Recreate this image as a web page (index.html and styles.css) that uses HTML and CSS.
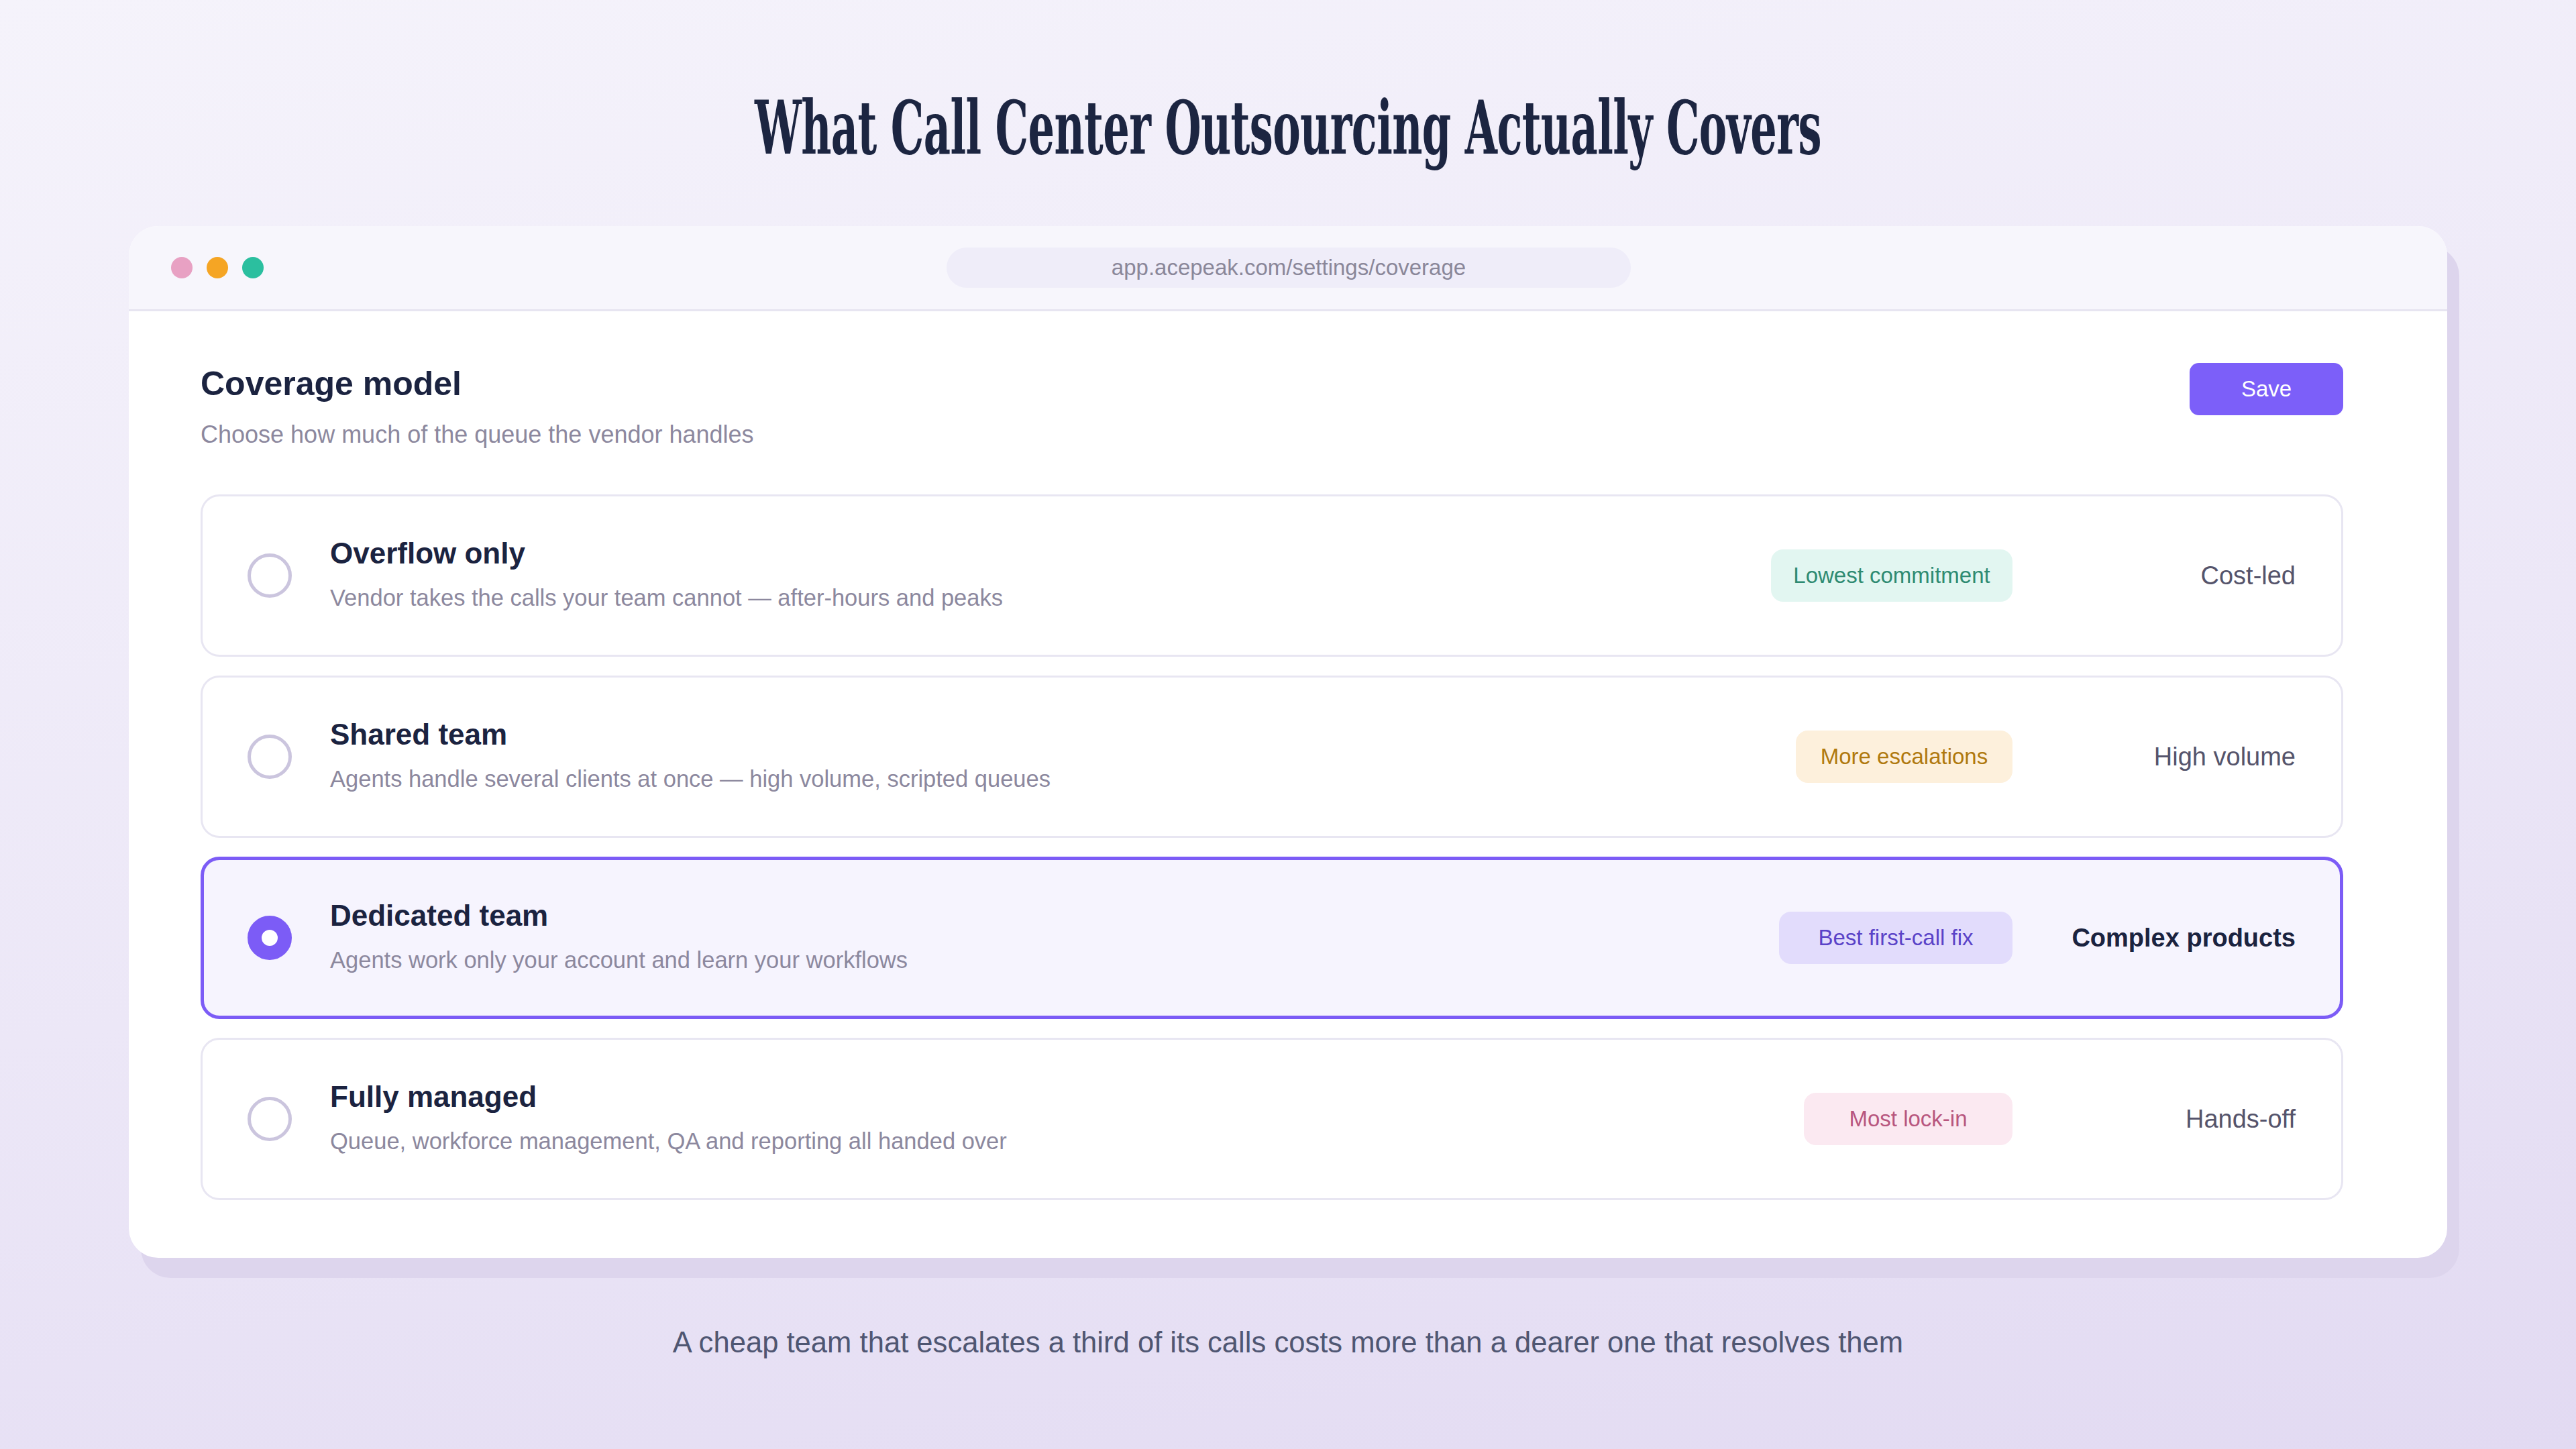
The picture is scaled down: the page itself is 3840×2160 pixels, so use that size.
FILE: index.html
```html
<!DOCTYPE html>
<html lang="en">
<head>
<meta charset="utf-8">
<title>What Call Center Outsourcing Actually Covers</title>
<link rel="stylesheet" href="styles.css">
</head>
<body>
<main class="slide">
  <h1 class="headline"><span class="headline__text">What Call Center Outsourcing Actually Covers</span></h1>

  <section class="window">
    <header class="window__bar">
      <div class="dots">
        <span class="dot dot--pink"></span>
        <span class="dot dot--orange"></span>
        <span class="dot dot--green"></span>
      </div>
      <div class="url">app.acepeak.com/settings/coverage</div>
      <div class="bar-spacer"></div>
    </header>

    <div class="window__body">
      <div class="panel-head">
        <div class="panel-head__text">
          <h2 class="panel-title">Coverage model</h2>
          <p class="panel-sub">Choose how much of the queue the vendor handles</p>
        </div>
        <button class="btn-save" type="button">Save</button>
      </div>

      <ul class="options">
        <li class="option">
          <span class="radio"></span>
          <div class="option__text">
            <div class="option__title">Overflow only</div>
            <div class="option__desc">Vendor takes the calls your team cannot — after-hours and peaks</div>
          </div>
          <span class="badge badge--teal">Lowest commitment</span>
          <span class="option__fit">Cost-led</span>
        </li>
        <li class="option">
          <span class="radio"></span>
          <div class="option__text">
            <div class="option__title">Shared team</div>
            <div class="option__desc">Agents handle several clients at once — high volume, scripted queues</div>
          </div>
          <span class="badge badge--amber">More escalations</span>
          <span class="option__fit">High volume</span>
        </li>
        <li class="option option--selected">
          <span class="radio radio--on"></span>
          <div class="option__text">
            <div class="option__title">Dedicated team</div>
            <div class="option__desc">Agents work only your account and learn your workflows</div>
          </div>
          <span class="badge badge--violet">Best first-call fix</span>
          <span class="option__fit option__fit--strong">Complex products</span>
        </li>
        <li class="option">
          <span class="radio"></span>
          <div class="option__text">
            <div class="option__title">Fully managed</div>
            <div class="option__desc">Queue, workforce management, QA and reporting all handed over</div>
          </div>
          <span class="badge badge--rose">Most lock-in</span>
          <span class="option__fit">Hands-off</span>
        </li>
      </ul>
    </div>
  </section>

  <p class="caption">A cheap team that escalates a third of its calls costs more than a dearer one that resolves them</p>
</main>
</body>
</html>
```

FILE: styles.css
```css
* {
  box-sizing: border-box;
}

html,
body {
  margin: 0;
  padding: 0;
  width: 3840px;
  height: 2160px;
}

body {
  background: linear-gradient(170deg, #f5f3fb 0%, #ece7f7 55%, #e2daf2 100%);
  font-family: "Liberation Sans", Arial, sans-serif;
  color: #1c2340;
  overflow: hidden;
}

.slide {
  width: 3840px;
  height: 2160px;
  padding-top: 136px;
  display: flex;
  flex-direction: column;
  align-items: center;
}

/* Headline */
.headline {
  margin: 0;
  width: 100%;
  text-align: center;
  font-family: "DejaVu Serif", "Liberation Serif", serif;
  font-weight: 700;
  font-size: 110px;
  line-height: 110px;
  color: #1c2541;
  white-space: nowrap;
}

.headline__text {
  display: inline-block;
  transform: scaleX(0.565);
  transform-origin: center center;
  letter-spacing: -1px;
}

/* Window */
.window {
  margin-top: 91px;
  width: 3456px;
  background: #ffffff;
  border-radius: 44px;
  box-shadow: 18px 30px 0 #ddd5ed;
  overflow: hidden;
}

.window__bar {
  height: 127px;
  background: #f7f6fc;
  border-bottom: 3px solid #e7e5f1;
  display: grid;
  grid-template-columns: 1fr 1020px 1fr;
  align-items: center;
  padding: 0 61px 0 63px;
}

.dots {
  display: flex;
  gap: 21px;
}

.dot {
  width: 32px;
  height: 32px;
  border-radius: 50%;
}

.dot--pink { background: #e8a1c3; }
.dot--orange { background: #f5a524; }
.dot--green { background: #2bbf9f; }

.url {
  height: 60px;
  border-radius: 30px;
  background: #efedf9;
  color: #8a8799;
  font-size: 33px;
  line-height: 60px;
  text-align: center;
}

.window__body {
  padding: 78px 155px 86px 107px;
}

/* Panel head */
.panel-head {
  display: flex;
  justify-content: space-between;
  align-items: flex-start;
}

.panel-title {
  margin: 0;
  font-size: 50px;
  line-height: 60px;
  font-weight: 700;
  color: #1b2340;
}

.panel-sub {
  margin: 24px 0 0;
  font-size: 36px;
  line-height: 43px;
  color: #8c889e;
}

.btn-save {
  margin-top: -1px;
  width: 229px;
  height: 78px;
  border: 0;
  border-radius: 14px;
  background: #7c5ff9;
  color: #ffffff;
  font-family: "Liberation Sans", Arial, sans-serif;
  font-size: 33px;
  font-weight: 500;
  padding: 0;
}

/* Options */
.options {
  list-style: none;
  margin: 68px 0 0;
  padding: 0;
  display: flex;
  flex-direction: column;
  gap: 28px;
}

.option {
  height: 242px;
  border: 3px solid #e8e6f2;
  border-radius: 28px;
  background: #ffffff;
  display: grid;
  grid-template-columns: 66px 1fr auto 365px;
  column-gap: 57px;
  align-items: center;
  padding: 0 68px 0 67px;
}

.option--selected {
  border: 5px solid #7c5cf6;
  background: #f6f4fe;
  padding: 0 66px 0 65px;
}

.radio {
  width: 66px;
  height: 66px;
  border-radius: 50%;
  border: 5px solid #cbc5de;
  background: #ffffff;
}

.radio--on {
  border: 21px solid #7c5cf6;
}

.option__text {
  margin-top: -6px;
}

.option__title {
  font-size: 44px;
  line-height: 53px;
  font-weight: 700;
  color: #1b2340;
}

.option__desc {
  margin-top: 20px;
  font-size: 34.5px;
  line-height: 41px;
  color: #8c889e;
}

.badge {
  height: 78px;
  border-radius: 18px;
  display: inline-flex;
  align-items: center;
  justify-content: center;
  font-size: 33px;
  white-space: nowrap;
}

.badge--teal {
  width: 360px;
  background: #e2f6f1;
  color: #2e8b72;
}

.badge--amber {
  width: 323px;
  background: #fdf0dc;
  color: #b0790e;
}

.badge--violet {
  width: 348px;
  background: #e2dcfc;
  color: #5a43c8;
}

.badge--rose {
  width: 311px;
  background: #fbe9f1;
  color: #b8567e;
}

.option__fit {
  text-align: right;
  font-size: 38px;
  color: #55546b;
  white-space: nowrap;
}

.option__fit--strong {
  font-weight: 700;
  color: #1b2340;
}

/* Caption */
.caption {
  margin: 100px 0 0;
  font-size: 43.6px;
  line-height: 52px;
  color: #4f5672;
  text-align: center;
}
```
